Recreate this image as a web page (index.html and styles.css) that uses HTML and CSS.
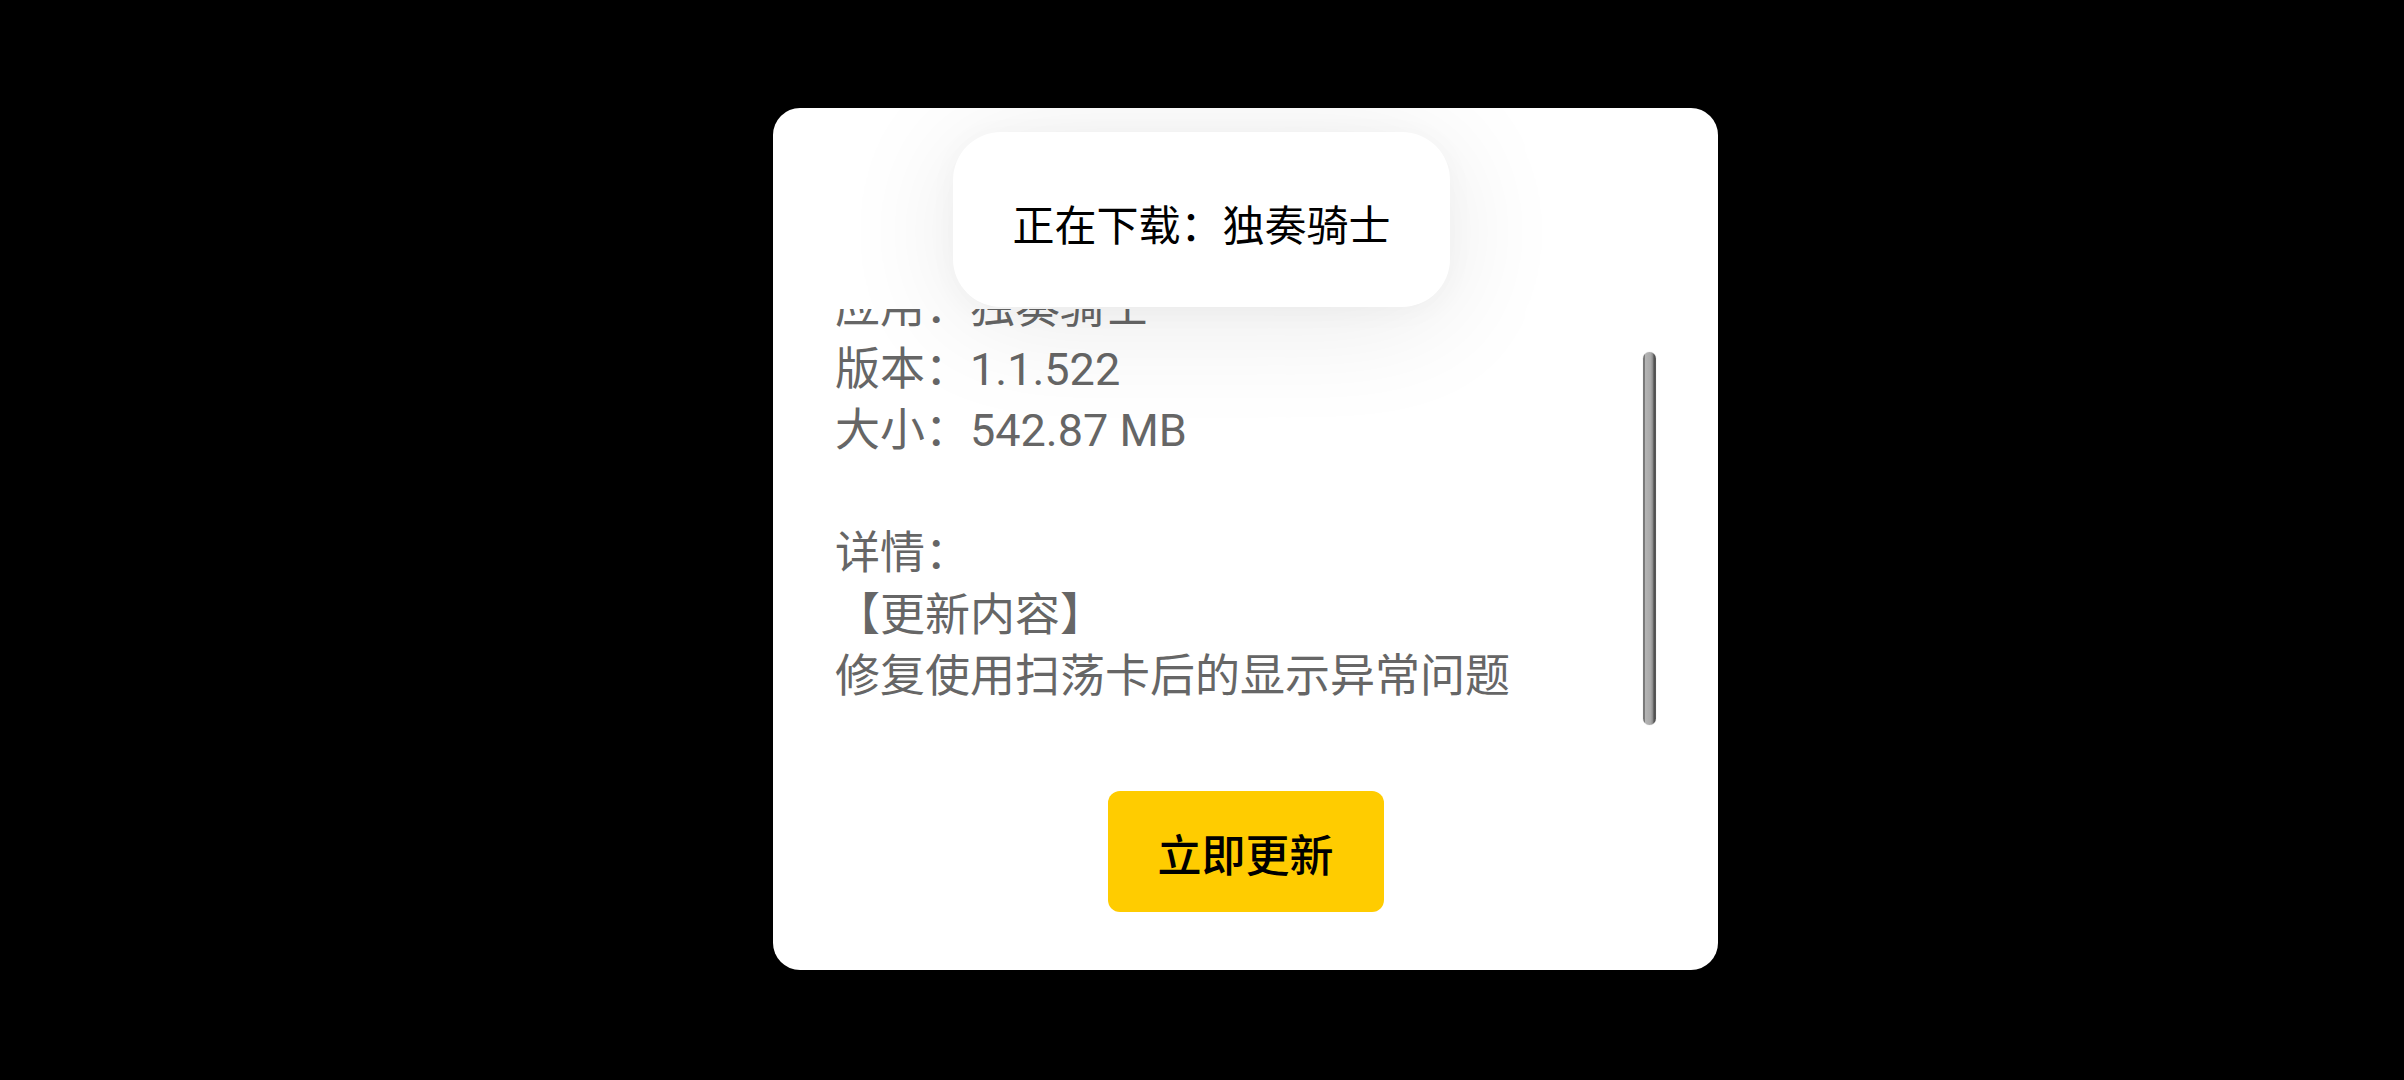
FILE: index.html
```html
<!DOCTYPE html>
<html lang="zh-CN">
<head>
<meta charset="utf-8">
<title>更新</title>
<link rel="stylesheet" href="styles.css">
</head>
<body>
<div class="screen">
  <div class="dialog">
    <div class="body-row">
      <div class="viewport">
        <div class="content">
          <p class="line">应用：独奏骑士</p>
          <p class="line">版本：1.1.522</p>
          <p class="line">大小：542.87 MB</p>
          <p class="line blank">&nbsp;</p>
          <p class="line">详情：</p>
          <p class="line">【更新内容】</p>
          <p class="line">修复使用扫荡卡后的显示异常问题</p>
        </div>
      </div>
      <div class="scroll-track"><div class="scroll-thumb"></div></div>
    </div>
    <div class="actions">
      <button class="update-btn" type="button">立即更新</button>
    </div>
  </div>
  <div class="toast">正在下载：独奏骑士</div>
</div>
</body>
</html>
```

FILE: styles.css
```css
html, body {
  margin: 0;
  padding: 0;
  background: #000;
}

body {
  width: 2404px;
  height: 1080px;
  overflow: hidden;
  font-family: Roboto, "Noto Sans CJK SC", sans-serif;
}

.screen {
  position: relative;
  width: 2404px;
  height: 1080px;
  padding-top: 108px;
  padding-left: 773px;
  box-sizing: border-box;
}

.dialog {
  width: 945px;
  height: 862px;
  background: #fff;
  border-radius: 27px;
  box-sizing: border-box;
  padding: 201px 62px 0 62px;
  display: flex;
  flex-direction: column;
}

.body-row {
  display: flex;
  height: 431px;
}

.viewport {
  flex: 1;
  overflow: hidden;
  height: 431px;
}

.content {
  margin-top: -32px;
}

.line {
  margin: 0;
  font-size: 45px;
  line-height: 61.5px;
  color: #666;
  white-space: nowrap;
}

.num {
  letter-spacing: 0.5px;
}

.scroll-track {
  width: 13px;
  padding-top: 43px;
  margin-left: 8px;
}

.scroll-thumb {
  width: 13px;
  height: 373px;
  box-sizing: border-box;
  border-radius: 7px;
  background: linear-gradient(to right, #7a7a7a 0, #7a7a7a 1.5px, #b4b4b4 2.5px, #a9a9a9 60%, #8a8a8a 75%, #4f4f4f 85%, #5a5a5a 100%);
  box-shadow: 0 0 1px rgba(0,0,0,0.3);
}

.actions {
  display: flex;
  justify-content: center;
  margin-top: 51px;
}

.update-btn {
  width: 276px;
  height: 121px;
  border: none;
  border-radius: 12px;
  background: #ffcc00;
  color: #000;
  font-family: "Noto Sans CJK SC", sans-serif;
  font-size: 44px;
  font-weight: 500;
  padding: 0;
  padding-top: 2px;
}

.toast {
  position: absolute;
  left: 953px;
  top: 132px;
  width: 497px;
  height: 175px;
  box-sizing: border-box;
  padding-top: 6px;
  border-radius: 48px;
  background: #fff;
  box-shadow: 0 12px 120px rgba(0,0,0,0.09), 0 4px 30px rgba(0,0,0,0.03);
  display: flex;
  align-items: center;
  justify-content: center;
  font-family: "Noto Sans CJK SC", sans-serif;
  font-size: 42px;
  color: #000;
  white-space: nowrap;
}
```
